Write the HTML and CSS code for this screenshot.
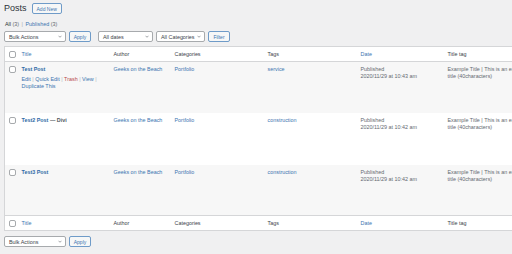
FILE: index.html
```html
<!DOCTYPE html>
<html lang="en">
<head>
    <meta charset="UTF-8">
    <title>Posts</title>
    <link rel="stylesheet" href="styles.css">
</head>
<body>
    <div class="wrap">
        <div class="page-head">
            <h1>Posts</h1>
            <a class="button">Add New</a>
        </div>
        <div class="views">
            <span class="current">All</span> <span class="count">(3)</span> <span class="sep">|</span>
            <a>Published</a> <span class="count">(3)</span>
        </div>

        <div class="tablenav">
            <div class="select w-bulk"><span>Bulk Actions</span><svg viewBox="0 0 8 5"><path d="M1 1l3 3 3-3"/></svg></div>
            <a class="button">Apply</a>
            <div class="select w-dates gap"><span>All dates</span><svg viewBox="0 0 8 5"><path d="M1 1l3 3 3-3"/></svg></div>
            <div class="select w-cats"><span>All Categories</span><svg viewBox="0 0 8 5"><path d="M1 1l3 3 3-3"/></svg></div>
            <a class="button">Filter</a>
        </div>

        <table class="posts">
            <colgroup>
                <col class="c-cb"><col class="c-title"><col class="c-author"><col class="c-cats">
                <col class="c-tags"><col class="c-date"><col class="c-seo">
            </colgroup>
            <thead>
                <tr>
                    <th><span class="check"></span></th>
                    <th><a>Title</a></th>
                    <th>Author</th>
                    <th>Categories</th>
                    <th>Tags</th>
                    <th><a>Date</a></th>
                    <th>Title tag</th>
                </tr>
            </thead>
            <tbody>
                <tr class="alt">
                    <td><span class="check"></span></td>
                    <td>
                        <a class="row-title">Test Post</a>
                        <div class="row-actions">
                            <a>Edit</a> <span class="sep">|</span> <a>Quick Edit</a> <span class="sep">|</span>
                            <a class="trash">Trash</a> <span class="sep">|</span> <a>View</a> <span class="sep">|</span><br>
                            <a>Duplicate This</a>
                        </div>
                    </td>
                    <td><a>Geeks on the Beach</a></td>
                    <td><a>Portfolio</a></td>
                    <td><a>service</a></td>
                    <td class="muted">Published<br>2020/11/29 at 10:43 am</td>
                    <td class="muted nowrap">Example Title | This is an example<br>title (40characters)</td>
                </tr>
                <tr>
                    <td><span class="check"></span></td>
                    <td><a class="row-title">Test2 Post</a> <span class="state">— Divi</span></td>
                    <td><a>Geeks on the Beach</a></td>
                    <td><a>Portfolio</a></td>
                    <td><a>construction</a></td>
                    <td class="muted">Published<br>2020/11/29 at 10:42 am</td>
                    <td class="muted nowrap">Example Title | This is an example<br>title (40characters)</td>
                </tr>
                <tr class="alt">
                    <td><span class="check"></span></td>
                    <td><a class="row-title">Test3 Post</a></td>
                    <td><a>Geeks on the Beach</a></td>
                    <td><a>Portfolio</a></td>
                    <td><a>construction</a></td>
                    <td class="muted">Published<br>2020/11/29 at 10:42 am</td>
                    <td class="muted nowrap">Example Title | This is an example<br>title (40characters)</td>
                </tr>
            </tbody>
            <tfoot>
                <tr>
                    <th><span class="check"></span></th>
                    <th><a>Title</a></th>
                    <th>Author</th>
                    <th>Categories</th>
                    <th>Tags</th>
                    <th><a>Date</a></th>
                    <th>Title tag</th>
                </tr>
            </tfoot>
        </table>

        <div class="tablenav bottom">
            <div class="select w-bulk"><span>Bulk Actions</span><svg viewBox="0 0 8 5"><path d="M1 1l3 3 3-3"/></svg></div>
            <a class="button">Apply</a>
        </div>
    </div>
</body>
</html>
```

FILE: styles.css
```css
body {
    margin: 0;
    background: #f0f0f1;
    font-family: "Liberation Sans", Arial, sans-serif;
    font-size: 5.4px;
    color: #50575e;
    overflow: hidden;
}
a {
    color: #3b74b0;
    text-decoration: none;
}
.wrap {
    padding-left: 4px;
    width: 580px;
}

/* header */
.page-head {
    display: flex;
    align-items: center;
    gap: 5px;
    height: 11px;
    margin-top: 3px;
}
h1 {
    margin: 0;
    font-size: 9px;
    font-weight: normal;
    color: #2c3338;
    line-height: 11px;
}
.button {
    display: inline-flex;
    align-items: center;
    justify-content: center;
    height: 11px;
    box-sizing: border-box;
    padding: 0 4px;
    border: 1px solid #6f9bc8;
    border-radius: 2px;
    background: #f6f7f7;
    color: #3b74b0;
    font-size: 5px;
}
.views {
    margin-top: 7px;
    line-height: 7px;
    padding-left: 1px;
    color: #646970;
}
.views .current {
    color: #2c3338;
}
.views .sep {
    margin: 0 1px;
    color: #a7aaad;
}

/* filters */
.tablenav {
    display: flex;
    align-items: center;
    gap: 3px;
    margin-top: 3px;
    height: 11px;
}
.tablenav.bottom {
    margin-top: 5px;
}
.select {
    display: flex;
    align-items: center;
    justify-content: space-between;
    height: 11px;
    box-sizing: border-box;
    padding: 0 3px 0 4px;
    border: 1px solid #a7aaad;
    border-radius: 2px;
    background: #fff;
    color: #3c434a;
}
.select svg {
    width: 4px;
    height: 3px;
    fill: none;
    stroke: #646970;
    stroke-width: 1.2;
}
.w-bulk { width: 62px; }
.w-dates { width: 55px; }
.w-cats { width: 49px; }
.gap { margin-left: 4px; }
.tablenav .button { width: 22px; }

/* table */
.posts {
    margin-top: 4px;
    width: 575px;
    table-layout: fixed;
    border-collapse: collapse;
    border: 1px solid #d5d6d8;
    background: #fff;
}
.c-cb { width: 14px; }
.c-title { width: 92px; }
.c-author { width: 61px; }
.c-cats { width: 93px; }
.c-tags { width: 93px; }
.c-date { width: 87px; }
.posts th {
    height: 14px;
    padding: 0 3px;
    text-align: left;
    font-weight: normal;
    color: #3c434a;
}
.posts thead tr { border-bottom: 1px solid #d5d6d8; }
.posts tfoot tr { border-top: 1px solid #d5d6d8; }
.posts th:first-child,
.posts td:first-child {
    padding: 0 0 0 4px;
}
.posts tbody tr {
    height: 51px;
}
.posts tbody tr:nth-child(2) { height: 52px; }
.posts tr.alt { background: #f7f7f7; }
.posts td {
    vertical-align: top;
    padding: 4px 3px 0;
    line-height: 7px;
}
.posts td:first-child { padding-top: 4px; }
.check {
    display: block;
    width: 7px;
    height: 7px;
    box-sizing: border-box;
    border: 1px solid #a7aaad;
    border-radius: 2px;
    background: #fff;
}
.row-title {
    font-weight: bold;
    color: #2f6aa6;
}
.state {
    font-weight: bold;
    color: #50575e;
}
.row-actions {
    margin-top: 2.5px;
    line-height: 7.5px;
}
.row-actions .sep {
    color: #b5b7ba;
}
.row-actions .trash {
    color: #b94a4b;
}
.muted {
    color: #646970;
}
.nowrap {
    white-space: nowrap;
}
```
